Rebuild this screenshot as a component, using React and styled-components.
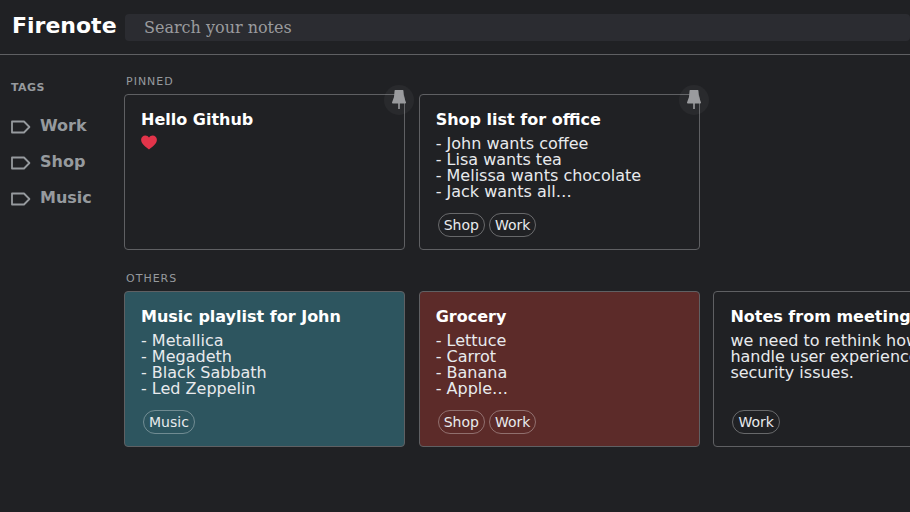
import styled, { createGlobalStyle } from 'styled-components'

const GlobalStyle = createGlobalStyle`
html, body {
  margin:0;
  padding:0;
  height:100%;
  overflow:hidden;
  background:#202124;
}
* { box-sizing:border-box; }
`
const Page = styled.div`
width:910px;
height:512px;
overflow:hidden;
background:#202124;
color:#e8eaed;
font-family:"DejaVu Sans", sans-serif;
`
const Header = styled.header`
height:55px;
display:flex;
align-items:flex-start;
padding:14px 0 0 12px;
border-bottom:1px solid #5f6063;
`
const Logo = styled.h1`
margin:-1px 0 0 0;
width:113px;
flex:none;
font-size:22px;
line-height:26px;
font-weight:bold;
color:#fff;
`
const Search = styled.input`
flex:1;
height:27px;
padding:0 19px;
border:none;
border-radius:4px;
outline:none;
background:#2b2c31;
font-family:"DejaVu Serif", serif;
font-size:16px;
color:#e8eaed;
&::placeholder { color:#9a9b9e; opacity:1; }
`
const Body = styled.div`
display:flex;
`
const Sidebar = styled.aside`
width:124px;
flex:none;
padding:26px 0 0 11px;
`
const SideTitle = styled.h2`
margin:0 0 13px 0;
font-size:11px;
line-height:13px;
font-weight:bold;
letter-spacing:.4px;
color:#969a9e;
`
const TagRow = styled.div`
height:36px;
display:flex;
align-items:center;
gap:9px;
font-size:16px;
font-weight:bold;
color:#969a9e;
`
const TagGlyph = styled.svg`
display:block;
flex:none;
margin-top:4px;
`
const Main = styled.main`
flex:1;
padding-top:20px;
min-width:0;
`
const SectionLabel = styled.div`
margin-left:2px;
height:13px;
font-size:11px;
line-height:13px;
letter-spacing:1px;
color:#969a9e;
`
const CardRow = styled.div`
display:flex;
gap:13.7px;
margin-top:6px;
margin-bottom:22px;
`
const Card = styled.article`
position:relative;
width:281px;
height:156px;
flex:none;
padding:16px 16px 0 16px;
border:1px solid ${p => p.$border || '#5f6063'};
border-radius:4px;
background:${p => p.$bg || 'transparent'};
display:flex;
flex-direction:column;
`
const Title = styled.h3`
margin:0;
font-size:16px;
line-height:18px;
font-weight:bold;
color:#fff;
white-space:nowrap;
`
const Content = styled.div`
margin-top:7px;
height:64px;
font-size:16px;
line-height:16px;
color:#e8eaed;
white-space:nowrap;
overflow:hidden;
`
const Chips = styled.div`
margin-top:auto;
margin-bottom:12px;
margin-left:2px;
display:flex;
gap:4px;
`
const Chip = styled.span`
height:24px;
padding:0 5px;
border:1px solid rgba(255,255,255,.32);
border-radius:12px;
font-size:14px;
line-height:22px;
color:#e8eaed;
`
const PinButton = styled.div`
position:absolute;
top:-10px;
right:-10px;
width:30px;
height:30px;
border-radius:50%;
background:rgba(255,255,255,.045);
display:flex;
align-items:center;
justify-content:center;
`
const Heart = styled.svg`
display:block;
margin-top:6px;
`

function TagIcon() {
  return (
    <TagGlyph width="20" height="16" viewBox="0 0 20 16" fill="none">
      <path d="M1 2.5H13L18.4 8L13 13.5H1Z" stroke="#969a9e" strokeWidth="1.8" strokeLinejoin="round" />
    </TagGlyph>
  )
}

function PinIcon() {
  return (
    <svg width="16" height="22" viewBox="0 0 16 22">
      <path d="M3.6 1.5Q3.6 1 4.2 1H11.8Q12.4 1 12.4 1.5L13 8L15 13.5Q15.2 14.5 14 14.5H2Q.8 14.5 1 13.5L3 8Z" fill="#9a9b9e" />
      <rect x="7.2" y="14" width="1.6" height="6" fill="#9a9b9e" />
    </svg>
  )
}

function Note({ title, lines, tags, bg, border, pinned, children }) {
  return (
    <Card $bg={bg} $border={border}>
      {pinned && <PinButton><PinIcon /></PinButton>}
      <Title>{title}</Title>
      {children || (
        <Content>
          {lines.map(l => <div key={l}>{l}</div>)}
        </Content>
      )}
      {tags && (
        <Chips>
          {tags.map(t => <Chip key={t}>{t}</Chip>)}
        </Chips>
      )}
    </Card>
  )
}

export default function App() {
  return (
    <Page>
      <GlobalStyle />
      <Header>
        <Logo>Firenote</Logo>
        <Search placeholder="Search your notes" />
      </Header>
      <Body>
        <Sidebar>
          <SideTitle>TAGS</SideTitle>
          <TagRow><TagIcon />Work</TagRow>
          <TagRow><TagIcon />Shop</TagRow>
          <TagRow><TagIcon />Music</TagRow>
        </Sidebar>
        <Main>
          <SectionLabel>PINNED</SectionLabel>
          <CardRow>
            <Note title="Hello Github" pinned>
              <Heart width="16" height="15" viewBox="0 0 16 15">
                <path d="M8 14.6C5 12 .1 9.2 .1 4.8C.1 2.2 2.1 .4 4.3 .4C6 .4 7.2 1.3 8 2.5C8.8 1.3 10 .4 11.7 .4C13.9 .4 15.9 2.2 15.9 4.8C15.9 9.2 11 12 8 14.6Z" fill="#e2344a" />
              </Heart>
            </Note>
            <Note
              title="Shop list for office"
              pinned
              lines={['- John wants coffee', '- Lisa wants tea', '- Melissa wants chocolate', '- Jack wants all…']}
              tags={['Shop', 'Work']}
            />
          </CardRow>
          <SectionLabel>OTHERS</SectionLabel>
          <CardRow>
            <Note
              title="Music playlist for John"
              bg="#2d555f"
              lines={['- Metallica', '- Megadeth', '- Black Sabbath', '- Led Zeppelin']}
              tags={['Music']}
            />
            <Note
              title="Grocery"
              bg="#5c2b29"
              lines={['- Lettuce', '- Carrot', '- Banana', '- Apple…']}
              tags={['Shop', 'Work']}
            />
            <Note
              title="Notes from meeting"
              lines={['we need to rethink how we', 'handle user experience and', 'security issues.']}
              tags={['Work']}
            />
          </CardRow>
        </Main>
      </Body>
    </Page>
  )
}
